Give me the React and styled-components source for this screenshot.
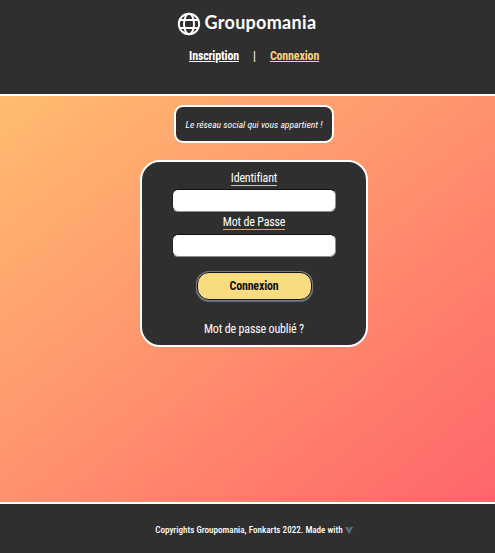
import React from 'react';
import styled, { createGlobalStyle } from 'styled-components';

const Global = createGlobalStyle`
  * { box-sizing: border-box; }
  html, body { margin: 0; overflow: hidden; background: #2f2f2f; }
  body { font-family: "Roboto Condensed", Roboto, sans-serif; font-stretch: 75%; color: #fff; }
`;

const Page = styled.div`
  width: 508px;
  height: 553px;
  display: flex;
  flex-direction: column;
`;

const Header = styled.header`
  height: 96px;
  flex: none;
  display: flex;
  flex-direction: column;
  align-items: center;
  background: #2f2f2f;
  border-bottom: 2px solid #fff;
`;

const Brand = styled.div`
  display: flex;
  align-items: center;
  gap: 4px;
  height: 24px;
  margin: 12px 15px 0 0;
`;

const BrandName = styled.span`
  width: 112px;
  font: 700 18px/21px Lato, sans-serif;
  height: 24px;
  letter-spacing: 0.3px;
  white-space: nowrap;
`;

const Nav = styled.nav`
  display: flex;
  align-items: center;
  justify-content: center;
  height: 16px;
  margin-top: 12px;
  font-size: 12px;
  letter-spacing: -0.16px;
`;

const NavLink = styled.a`
  color: ${(p) => (p.$active ? '#fbd27c' : '#fff')};
  font-weight: 700;
  & span span { text-decoration: underline; }
`;

const Divider = styled.span`
  width: 31px;
  text-align: center;
`;

/* Single-line text centred in a box of fixed width. */
const Fit = styled.span`
  display: inline-flex;
  justify-content: center;
  width: ${(p) => p.$w}px;
  white-space: nowrap;
`;

const Main = styled.main`
  flex: 1;
  display: flex;
  flex-direction: column;
  align-items: center;
  padding-top: 9px;
  background: linear-gradient(to bottom right, #ffbd70, #ff646b);
`;

const Tagline = styled.div`
  width: 160px;
  height: 38px;
  display: flex;
  align-items: center;
  justify-content: center;
  background: #2f2f2f;
  border: 2px solid #fff;
  border-radius: 9px;
  font-size: 9.6px;
  font-style: italic;
  font-weight: 400;
`;

const Card = styled.form`
  width: 228px;
  height: 187px;
  margin-top: 17px;
  display: flex;
  flex-direction: column;
  align-items: center;
  background: #2f2f2f;
  border: 2px solid #fff;
  border-radius: 20px;
  padding-top: 8px;
`;

const Label = styled.label`
  height: 16px;
  line-height: 16px;
  font-size: 12px;
  letter-spacing: -0.18px;
  border-bottom: 1px solid ${(p) => p.$line || '#c9c4bb'};
`;

const Input = styled.input`
  width: 164px;
  height: 23px;
  flex: none;
  margin: ${(p) => p.$top}px 0 ${(p) => p.$gap}px;
  border: 1px solid;
  border-color: #111 #8d9088 #8d9088 #222;
  border-radius: 6px;
  background: #fff;
`;

const Submit = styled.button`
  width: 115px;
  height: 28px;
  flex: none;
  padding: 0 0 1px;
  border: 1px solid #171717;
  border-radius: 12px;
  box-shadow: 0 0 0 1px #777a7b, 0 1px 1px 1px #66717b;
  background: #f9dc82;
  color: #111;
  font: inherit;
  font-size: 12px;
  font-weight: 700;
  letter-spacing: -0.18px;
`;

const Forgot = styled.a`
  margin-top: 21px;
  font-size: 12px;
  line-height: 16px;
  letter-spacing: -0.16px;
`;

const Footer = styled.footer`
  height: 51px;
  flex: none;
  display: flex;
  align-items: center;
  justify-content: center;
  gap: 2px;
  padding-top: 3px;
  border-top: 2px solid #fff;
  background: #2f2f2f;
  font-size: 9.1px;
  font-weight: 500;
`;

const Globe = () => (
  <svg width="24" height="24" viewBox="0 0 24 24" fill="none" stroke="#fff" strokeWidth="1.9">
    <circle cx="12" cy="12" r="10.2" />
    <ellipse cx="12" cy="12" rx="5" ry="10.2" />
    <path d="M2.8 8h18.4M2.8 16h18.4" />
  </svg>
);

const Vue = () => (
  <svg width="8" height="7" viewBox="0 0 8 7">
    <path d="M0 0h3l1 2 1-2h3L4 7z" fill="#607b8c" />
    <path d="M1.6 0H3l1 2 1-2h1.4L4 4.2z" fill="#46586c" />
  </svg>
);

const Text = ({ w, children }) => (
  <Fit $w={w}><span>{children}</span></Fit>
);

export default function App() {
  return (
    <Page>
      <Global />
      <Header>
        <Brand><Globe /><BrandName>Groupomania</BrandName></Brand>
        <Nav>
          <NavLink><Text w={50}>Inscription</Text></NavLink>
          <Divider>|</Divider>
          <NavLink $active><Text w={49}>Connexion</Text></NavLink>
        </Nav>
      </Header>
      <Main>
        <Tagline><Text w={136}>Le réseau social qui vous appartient !</Text></Tagline>
        <Card>
          <Label><Text w={46}>Identifiant</Text></Label>
          <Input $top={3} $gap={2} />
          <Label $line="#d8a36d"><Text w={62}>Mot de Passe</Text></Label>
          <Input $top={4} $gap={15} type="password" />
          <Submit type="button"><Text w={48}>Connexion</Text></Submit>
          <Forgot><Text w={100}>Mot de passe oublié ?</Text></Forgot>
        </Card>
      </Main>
      <Footer><Text w={188}>Copyrights Groupomania, Fonkarts 2022. Made with</Text><Vue /></Footer>
    </Page>
  );
}
